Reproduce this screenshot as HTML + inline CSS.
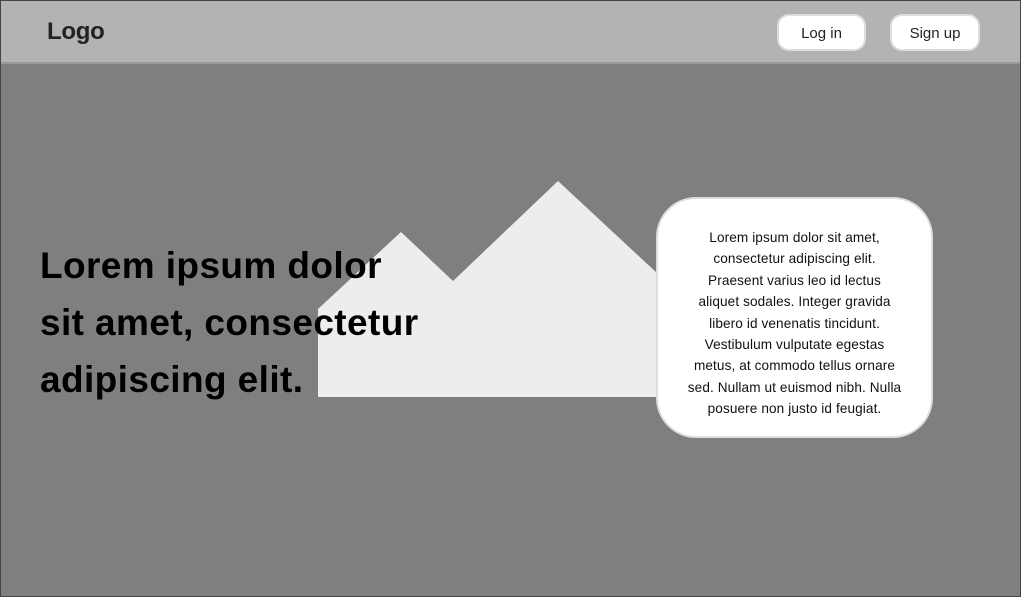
<!DOCTYPE html>
<html><head><style>
*{margin:0;padding:0;box-sizing:border-box}
body{width:1021px;height:597px;overflow:hidden;background:#7f7f7f;font-family:"Liberation Sans",sans-serif;position:relative}
.frame{position:absolute;left:0;top:0;width:1021px;height:597px;border:1px solid #444;z-index:5;pointer-events:none}
.hdr{position:absolute;left:0;top:0;width:1021px;height:64px;background:#b3b3b3;border-bottom:2px solid #9a9a9a}
.logo{position:absolute;left:47px;top:18px;font-size:24px;font-weight:bold;color:#222;letter-spacing:-0.3px}
.btn{position:absolute;top:14px;height:37px;background:#fff;border:2px solid #ddd;border-radius:12px;font-size:15px;color:#222;text-align:center;line-height:35px}
h1{position:absolute;left:40px;top:237px;font-size:37px;line-height:57px;font-weight:bold;color:#000;letter-spacing:0.4px;z-index:2;white-space:nowrap}
svg{position:absolute;left:0;top:0}
.card{position:absolute;left:656px;top:197px;width:277px;height:241px;background:#fff;border:2px solid #ddd;border-radius:40px;font-size:13.6px;line-height:21.4px;text-align:center;color:#111;padding:28px 0 0;white-space:nowrap;letter-spacing:0.1px}
</style></head><body>
<div class="hdr"><div class="logo">Logo</div>
<div class="btn" style="left:777px;width:89px">Log in</div>
<div class="btn" style="left:890px;width:90px">Sign up</div></div>
<svg width="1021" height="597"><polygon points="318,309 401,232 453,281 558,181 700,313 700,397 318,397" fill="#ededed"/></svg>
<h1>Lorem ipsum dolor<br>sit amet, consectetur<br>adipiscing elit.</h1>
<div class="card">Lorem ipsum dolor sit amet,<br>consectetur adipiscing elit.<br>Praesent varius leo id lectus<br>aliquet sodales. Integer gravida<br>libero id venenatis tincidunt.<br>Vestibulum vulputate egestas<br>metus, at commodo tellus ornare<br>sed. Nullam ut euismod nibh. Nulla<br>posuere non justo id feugiat.</div>
<div class="frame"></div>
</body></html>
